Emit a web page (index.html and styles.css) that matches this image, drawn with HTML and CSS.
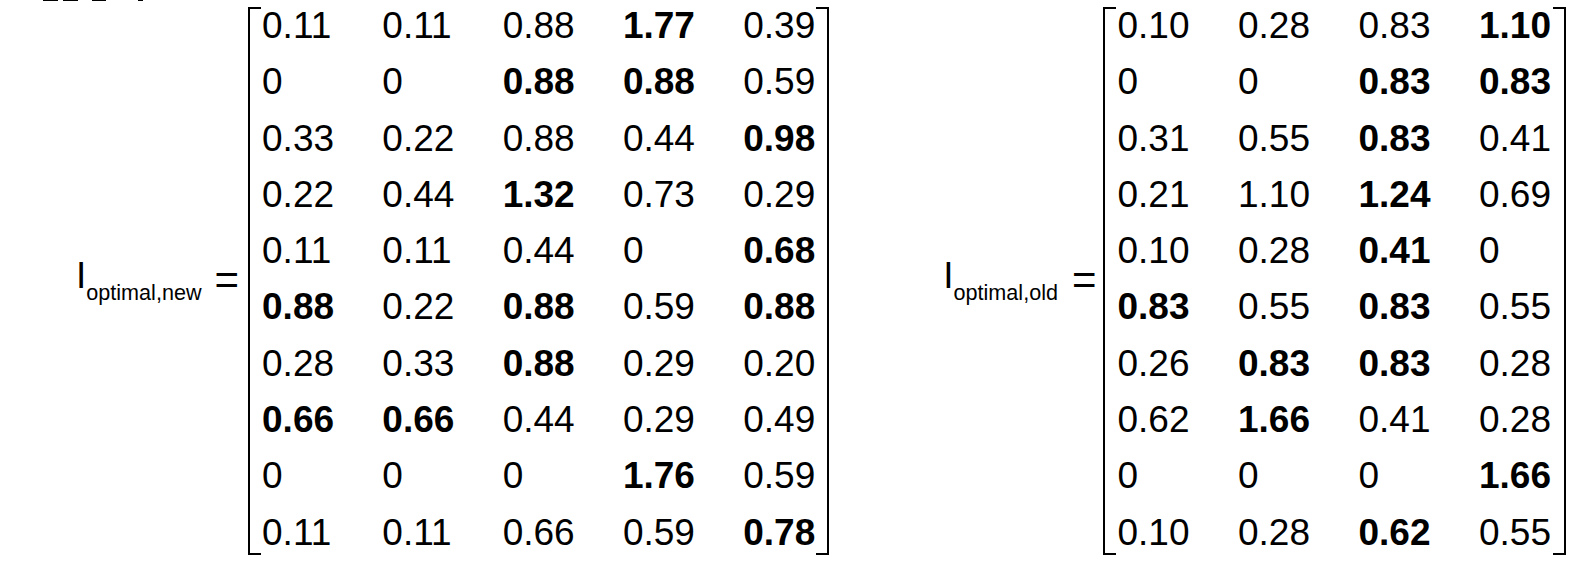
FILE: index.html
```html
<!DOCTYPE html>
<html>
<head>
<meta charset="utf-8">
<link rel="stylesheet" href="styles.css">
</head>
<body>
<div class="clip">
  <span class="frag f1"></span><span class="frag f2"></span><span class="frag f3"></span><span class="frag f4"></span>
</div>
<div class="page">
  <div class="eq eq-new">
    <div class="lhs">I<sub class="sub">optimal,new</sub></div>
    <div class="equals">=</div>
    <div class="matrix m5">
      <span>0.11</span><span>0.11</span><span>0.88</span><b>1.77</b><span>0.39</span>
      <span>0</span><span>0</span><b>0.88</b><b>0.88</b><span>0.59</span>
      <span>0.33</span><span>0.22</span><span>0.88</span><span>0.44</span><b>0.98</b>
      <span>0.22</span><span>0.44</span><b>1.32</b><span>0.73</span><span>0.29</span>
      <span>0.11</span><span>0.11</span><span>0.44</span><span>0</span><b>0.68</b>
      <b>0.88</b><span>0.22</span><b>0.88</b><span>0.59</span><b>0.88</b>
      <span>0.28</span><span>0.33</span><b>0.88</b><span>0.29</span><span>0.20</span>
      <b>0.66</b><b>0.66</b><span>0.44</span><span>0.29</span><span>0.49</span>
      <span>0</span><span>0</span><span>0</span><b>1.76</b><span>0.59</span>
      <span>0.11</span><span>0.11</span><span>0.66</span><span>0.59</span><b>0.78</b>
    </div>
  </div>
  <div class="eq eq-old">
    <div class="lhs">I<sub class="sub">optimal,old</sub></div>
    <div class="equals">=</div>
    <div class="matrix m4">
      <span>0.10</span><span>0.28</span><span>0.83</span><b>1.10</b>
      <span>0</span><span>0</span><b>0.83</b><b>0.83</b>
      <span>0.31</span><span>0.55</span><b>0.83</b><span>0.41</span>
      <span>0.21</span><span>1.10</span><b>1.24</b><span>0.69</span>
      <span>0.10</span><span>0.28</span><b>0.41</b><span>0</span>
      <b>0.83</b><span>0.55</span><b>0.83</b><span>0.55</span>
      <span>0.26</span><b>0.83</b><b>0.83</b><span>0.28</span>
      <span>0.62</span><b>1.66</b><span>0.41</span><span>0.28</span>
      <span>0</span><span>0</span><span>0</span><b>1.66</b>
      <span>0.10</span><span>0.28</span><b>0.62</b><span>0.55</span>
    </div>
  </div>
</div>
</body>
</html>
```
FILE: styles.css
```css
html, body {
  margin: 0;
  padding: 0;
  background: #fff;
}
body {
  width: 1580px;
  height: 568px;
  overflow: hidden;
  font-family: "Liberation Sans", Arial, sans-serif;
  color: #000;
}
.clip {
  display: flex;
  height: 1px;
}
.frag {
  display: block;
  height: 1px;
  background: #000;
}
.f1 { margin-left: 43px; width: 15px; }
.f2 { margin-left: 5px; width: 15px; }
.f3 { margin-left: 14px; width: 14px; }
.f4 { margin-left: 32px; width: 5px; }

.page {
  display: flex;
  margin-top: -3px;
}
.eq {
  display: flex;
  align-items: flex-start;
}
.eq-new { margin-left: 76px; }
.eq-old { margin-left: 114px; }

.lhs {
  font-size: 37px;
  line-height: 37px;
  margin-top: 259px;
  white-space: nowrap;
}
.sub {
  font-size: 21.6px;
  line-height: 22px;
  vertical-align: -12px;
}
.equals {
  font-size: 42px;
  line-height: 42px;
  margin-top: 261px;
  margin-left: 13px;
  margin-right: 8.5px;
}
.eq-old .equals {
  margin-left: 14px;
  margin-right: 7px;
}

.matrix {
  position: relative;
  display: grid;
  grid-auto-rows: 56.3px;
  padding: 0 14px 0 14.5px;
  font-size: 37px;
  line-height: 56.3px;
  white-space: nowrap;
}
.m5 { grid-template-columns: repeat(4, 120.3px) 72px; }
.m4 { grid-template-columns: repeat(3, 120.5px) 72.7px; padding-left: 14px; }
.matrix b { font-weight: bold; }
.matrix::before,
.matrix::after {
  content: "";
  position: absolute;
  top: 9px;
  bottom: 6px;
  width: 11px;
  border-top: 2px solid #000;
  border-bottom: 2px solid #000;
}
.matrix::before {
  left: 0;
  border-left: 2px solid #000;
}
.matrix::after {
  right: 0;
  border-right: 2px solid #000;
}
```
